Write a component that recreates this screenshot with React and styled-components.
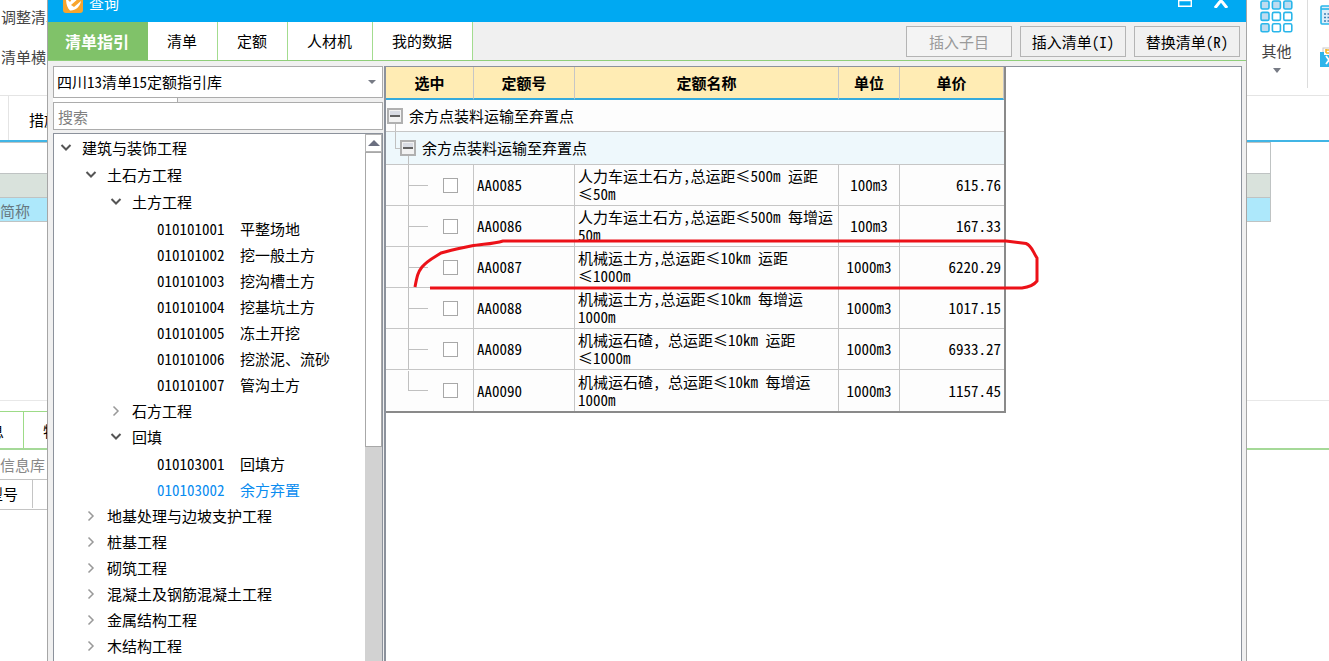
import React, { useState } from "react";
import styled, { createGlobalStyle, css } from "styled-components";

const tree = [
  {
    name: "建筑与装饰工程",
    open: true,
    children: [
      {
        name: "土石方工程",
        open: true,
        children: [
          {
            name: "土方工程",
            open: true,
            children: [
              { code: "010101001", name: "平整场地" },
              { code: "010101002", name: "挖一般土方" },
              { code: "010101003", name: "挖沟槽土方" },
              { code: "010101004", name: "挖基坑土方" },
              { code: "010101005", name: "冻土开挖" },
              { code: "010101006", name: "挖淤泥、流砂" },
              { code: "010101007", name: "管沟土方" },
            ],
          },
          { name: "石方工程" },
          {
            name: "回填",
            open: true,
            children: [
              { code: "010103001", name: "回填方" },
              { code: "010103002", name: "余方弃置" },
            ],
          },
        ],
      },
      { name: "地基处理与边坡支护工程" },
      { name: "桩基工程" },
      { name: "砌筑工程" },
      { name: "混凝土及钢筋混凝土工程" },
      { name: "金属结构工程" },
      { name: "木结构工程" },
    ],
  },
];

const quotas = [
  {
    code: "AA0085",
    name: ["人力车运土石方,总运距≤500m 运距", "≤50m"],
    unit: "100m3",
    price: "615.76",
  },
  {
    code: "AA0086",
    name: ["人力车运土石方,总运距≤500m 每增运", "50m"],
    unit: "100m3",
    price: "167.33",
  },
  {
    code: "AA0087",
    name: ["机械运土方,总运距≤10km 运距", "≤1000m"],
    unit: "1000m3",
    price: "6220.29",
  },
  {
    code: "AA0088",
    name: ["机械运土方,总运距≤10km 每增运", "1000m"],
    unit: "1000m3",
    price: "1017.15",
  },
  {
    code: "AA0089",
    name: ["机械运石碴, 总运距≤10km 运距", "≤1000m"],
    unit: "1000m3",
    price: "6933.27",
  },
  {
    code: "AA0090",
    name: ["机械运石碴, 总运距≤10km 每增运", "1000m"],
    unit: "1000m3",
    price: "1157.45",
  },
];

const tabs = ["清单指引", "清单", "定额", "人材机", "我的数据"];

const Chevron = ({ open }) => (
  <svg width="12" height="12" viewBox="0 0 12 12" fill="none">
    <path
      d={open ? "M1.5 3L6 7.5L10.5 3" : "M3.5 1.5L8 6L3.5 10.5"}
      stroke={open ? "#555" : "#999"}
      strokeWidth={open ? 2 : 1.5}
    />
  </svg>
);

const TreeNode = ({ node, selected, onSelect }) => {
  const [open, setOpen] = useState(!!node.open);
  if (node.code) {
    return (
      <li>
        <Leaf
          type="button"
          $active={selected === node.code}
          onClick={() => onSelect(node.code)}
        >
          <Code>{node.code}</Code>
          {node.name}
        </Leaf>
      </li>
    );
  }
  return (
    <li>
      <Branch type="button" aria-expanded={open} onClick={() => setOpen(!open)}>
        <Chevron open={open} />
        {node.name}
      </Branch>
      {open && node.children && (
        <Nested>
          {node.children.map((child) => (
            <TreeNode
              key={child.name}
              node={child}
              selected={selected}
              onSelect={onSelect}
            />
          ))}
        </Nested>
      )}
    </li>
  );
};

const Collapse = () => (
  <CollapseButton type="button" aria-label="折叠">
    <svg width="16" height="16" viewBox="0 0 16 16">
      <rect x="1" y="1" width="14" height="14" fill="#f2f2f2" stroke="#b0b0b0" strokeWidth="2" />
      <rect x="3" y="3" width="10" height="4" fill="#d9dce4" />
      <path d="M3 8H13" stroke="#333" strokeWidth="1.5" />
    </svg>
  </CollapseButton>
);

const Ribbon = () => (
  <RibbonBar>
    <RibbonText>
      <span>调整清单</span>
      <span>清单横</span>
    </RibbonText>
    <RibbonEnd>
      <Other type="button">
        <svg width="33" height="34" viewBox="0 0 33 34">
          {[0, 1, 2].map((r) =>
            [0, 1, 2].map((c) => (
              <rect
                key={`${r}${c}`}
                x={1 + c * 11.4}
                y={1 + r * 11.4}
                width="8"
                height="8"
                rx="1.5"
                fill={r === 0 || c === 0 ? "#bfdcf0" : "#fff"}
                stroke="#29b6ea"
                strokeWidth="1.6"
              />
            ))
          )}
        </svg>
        其他
        <svg width="8" height="5" viewBox="0 0 8 5">
          <path d="M0 0H8L4 5Z" fill="#777b85" />
        </svg>
      </Other>
      <RibbonTools>
        <svg width="18" height="20" viewBox="0 0 18 20">
          <rect x="1" y="1" width="16" height="18" rx="1" fill="#dceefa" stroke="#29b6ea" strokeWidth="1.6" />
          <path d="M1 4H17" stroke="#29b6ea" strokeWidth="1.6" />
          <path d="M4 9H17M4 12.5H17M4 16H17" stroke="#3d7fb5" strokeWidth="1.4" strokeDasharray="2 1.5" />
        </svg>
        <svg width="20" height="20" viewBox="0 0 20 20">
          <rect x="3" y="1" width="17" height="10" fill="#fff" stroke="#c8c8c8" />
          <path d="M6 2V6M6 3H20M6 6H20" stroke="#f7b52c" strokeWidth="1.6" />
          <path d="M0 5H4V8H20V20H0Z" fill="#2fb4ea" />
          <path d="M6 9L12 17M12 9L6 17" stroke="#fff" strokeWidth="1.8" />
        </svg>
      </RibbonTools>
    </RibbonEnd>
  </RibbonBar>
);

const Backdrop = () => (
  <Page>
    <Ribbon />
    <MainTabs>
      <span>措施项目</span>
    </MainTabs>
    <Sheet>
      <SheetRow />
      <SheetRow $kind="head" />
      <SheetRow $kind="picked">简称</SheetRow>
    </Sheet>
    <LowerTabs>
      <LowerTab>信息</LowerTab>
      <LowerTab>特征</LowerTab>
    </LowerTabs>
    <Library>信息库</Library>
    <SpecRow>
      <span>型号</span>
    </SpecRow>
  </Page>
);

const App = () => {
  const [tab, setTab] = useState(0);
  const [selected, setSelected] = useState("010103002");
  return (
    <>
      <GlobalStyle />
      <Backdrop />
      <Dialog role="dialog" aria-label="查询">
        <TitleBar>
          <svg width="20" height="19" viewBox="0 0 20 19">
            <rect width="20" height="19" rx="3" fill="#f8a52d" />
            <path d="M3 4C3 9 4 14 7 16.5C12 17 17 13 18 7L11 13L8 11L16 4L11 2L7 8Z" fill="#fff" />
          </svg>
          <h1>查询</h1>
          <WindowButton type="button" aria-label="最大化">
            <svg width="14" height="8" viewBox="0 0 14 8" fill="none">
              <path d="M0.7 0V7.3H13.3V0M0 1.5H14" stroke="#fff" strokeWidth="1.4" />
            </svg>
          </WindowButton>
          <WindowButton type="button" aria-label="关闭">
            <svg width="14" height="9" viewBox="0 0 14 9">
              <path d="M2 -5L13 9M12 -5L1 9" stroke="#fff" strokeWidth="3" />
            </svg>
          </WindowButton>
        </TitleBar>
        <TabBar>
          {tabs.map((label, i) => (
            <Tab
              key={label}
              type="button"
              $active={i === tab}
              onClick={() => setTab(i)}
            >
              {label}
            </Tab>
          ))}
          <Actions>
            <Action type="button" disabled>
              插入子目
            </Action>
            <Action type="button">插入清单(I)</Action>
            <Action type="button">替换清单(R)</Action>
          </Actions>
        </TabBar>
        <Body>
          <Side>
            <SelectBox>
              <select aria-label="指引库">
                <option>四川13清单15定额指引库</option>
              </select>
              <svg width="8" height="4" viewBox="0 0 8 4">
                <path d="M0 0H8L4 4Z" fill="#777b85" />
              </svg>
            </SelectBox>
            <Splitter />
            <Search type="text" placeholder="搜索" aria-label="搜索" />
            <TreePanel>
              <Tree>
                {tree.map((node) => (
                  <TreeNode
                    key={node.name}
                    node={node}
                    selected={selected}
                    onSelect={setSelected}
                  />
                ))}
              </Tree>
              <ScrollBar>
                <ScrollUp type="button" aria-label="向上滚动">
                  <svg width="12" height="6" viewBox="0 0 12 6">
                    <path d="M6 0L12 6H0Z" fill="#6b6f80" />
                  </svg>
                </ScrollUp>
                <Thumb />
              </ScrollBar>
            </TreePanel>
          </Side>
          <Content>
            <Table>
              <colgroup>
                <col width="88" />
                <col width="101" />
                <col width="264" />
                <col width="61" />
                <col width="104" />
              </colgroup>
              <thead>
                <tr>
                  <th>选中</th>
                  <th>定额号</th>
                  <th>定额名称</th>
                  <th>单位</th>
                  <th>单价</th>
                </tr>
              </thead>
              <tbody>
                <GroupRow>
                  <td colSpan="5">
                    <Group>
                      <Collapse />
                      余方点装料运输至弃置点
                    </Group>
                  </td>
                </GroupRow>
                <GroupRow $nested>
                  <td colSpan="5">
                    <Group $nested>
                      <Collapse />
                      余方点装料运输至弃置点
                    </Group>
                  </td>
                </GroupRow>
                {quotas.map((q, i) => (
                  <QuotaRow key={q.code}>
                    <td>
                      <Pick $last={i === quotas.length - 1}>
                        <input type="checkbox" aria-label={q.code} />
                      </Pick>
                    </td>
                    <td>{q.code}</td>
                    <NameCell>
                      {q.name.map((line) => (
                        <div key={line}>{line}</div>
                      ))}
                    </NameCell>
                    <UnitCell>{q.unit}</UnitCell>
                    <PriceCell>{q.price}</PriceCell>
                  </QuotaRow>
                ))}
              </tbody>
            </Table>
            <PenMark width="630" height="56" viewBox="0 0 630 56" fill="none">
              <path
                d="M5 48C7 37 8 33 12 28C18 21 25 18 31 14C42 11 52 9 61 7C73 5 83 5 93 2H596L616 4.5C622 7 623 13 627 19V42C624 46 620 48 612 49L20 49"
                stroke="#ec1118"
                strokeWidth="3"
              />
            </PenMark>
          </Content>
        </Body>
      </Dialog>
    </>
  );
};

export default App;

/* hwid: latin letters and digits take half of a CJK cell */
const GlobalStyle = createGlobalStyle`
  * {
    box-sizing: border-box;
  }

  body {
    margin: 0;
    overflow: hidden;
    background: #fff;
    color: #000;
    font-family: "Noto Sans CJK SC", sans-serif;
    font-size: 15px;
    font-feature-settings: "hwid";
    line-height: 18px;
  }

  button, input, select {
    font: inherit;
    font-feature-settings: inherit;
    color: inherit;
    margin: 0;
  }

  svg {
    display: block;
    flex-shrink: 0;
  }
`;

/* main window behind the dialog */

const Page = styled.main`
  display: flex;
  flex-direction: column;
  min-height: 100vh;
  white-space: nowrap;
`;

const RibbonBar = styled.header`
  display: flex;
  justify-content: space-between;
  height: 96px;
  border-bottom: 1px solid #e4e4e4;
  color: #444;
`;

const RibbonText = styled.div`
  display: flex;
  flex-direction: column;
  gap: 22px;
  padding: 8px 1px;
`;

const RibbonEnd = styled.div`
  display: flex;
  width: 83px;
  overflow: hidden;
`;

const Other = styled.button`
  display: flex;
  flex-direction: column;
  flex-shrink: 0;
  align-items: center;
  gap: 8px;
  width: 62px;
  height: 88px;
  padding: 0;
  border: none;
  border-right: 1px solid #dcdcdc;
  background: none;
`;

const RibbonTools = styled.div`
  display: flex;
  flex-direction: column;
  gap: 22px;
  padding: 5px 0 0 12px;
`;

const MainTabs = styled.nav`
  height: 46px;
  border-bottom: 2px solid #41b5e5;

  span {
    display: block;
    height: 44px;
    margin-left: 8px;
    padding-left: 20px;
    border-left: 1px solid #e4e4e4;
    line-height: 48px;
  }
`;

const Sheet = styled.div`
  height: 259px;
  padding-right: 58px;
  border-bottom: 1px solid #e8e8e8;
`;

const sheetColors = { head: "#d9e2dc", picked: "#ade8fb" };

const SheetRow = styled.div`
  height: ${({ $kind }) => ($kind ? 24 : 32)}px;
  border: solid #bfc3c3;
  border-width: ${({ $kind }) => ($kind ? "0 1px 1px 0" : "1px 1px 1px 0")};
  background: ${({ $kind }) => sheetColors[$kind] || "#fff"};
  color: #667780;
  line-height: 26px;
`;

const LowerTabs = styled.div`
  display: flex;
  height: 49px;
  padding-top: 10px;
  border-bottom: 2px solid #a5d998;
`;

const LowerTab = styled.div`
  display: flex;
  justify-content: flex-end;
  width: 24px;
  padding-right: 19px;
  border: solid #9ddb87;
  border-width: 1px 1px 0 0;
  line-height: 38px;

  & + & {
    justify-content: flex-start;
    width: 60px;
    padding-left: 19px;
  }
`;

const Library = styled.div`
  height: 29px;
  color: #888;
  line-height: 30px;
`;

const SpecRow = styled.div`
  width: 60px;
  height: 31px;
  border: solid #c4c4c4;
  border-width: 1px 0;
  line-height: 28px;

  span {
    display: flex;
    justify-content: flex-end;
    width: 33px;
    padding-right: 14px;
    border-right: 1px solid #c4c4c4;
  }
`;

/* dialog */

const Dialog = styled.section`
  position: fixed;
  inset: 0 82px 0 47px;
  display: flex;
  flex-direction: column;
  overflow: hidden;
  border: solid #a6a6a6;
  border-width: 0 1px;
  background: #f0f0f0;
  white-space: nowrap;
`;

const TitleBar = styled.header`
  display: flex;
  flex-shrink: 0;
  align-items: center;
  gap: 6px;
  height: 38px;
  margin-top: -16px;
  padding: 0 18px 0 15px;
  background: #00a9f2;
  color: #fff;

  h1 {
    flex: 1;
    margin: 0;
    font-size: 15px;
    font-weight: 400;
  }
`;

const WindowButton = styled.button`
  padding: 0;
  border: none;
  background: none;

  & + & {
    margin-left: 16px;
  }
`;

const TabBar = styled.nav`
  display: flex;
  flex-shrink: 0;
  height: 39px;
  border-bottom: 1px solid #8fce7a;
`;

const Tab = styled.button`
  padding: 0 20px 0 19px;
  border: none;
  border-right: 1px solid #a3dc8f;
  background: #fff;

  ${({ $active }) =>
    $active &&
    css`
      padding: 0 18px 0 17px;
      border-color: #80c269;
      background: #80c269;
      color: #fff;
      font-size: 16px;
      font-weight: 700;
    `}
`;

const Actions = styled.div`
  display: flex;
  gap: 8px;
  margin-left: auto;
  padding: 4px 6px 3px 0;
`;

const Action = styled.button`
  width: 106px;
  padding: 0;
  border: 1px solid #b4b4b4;
  background: #f0f0f0;

  &:disabled {
    background: #f4f4f4;
    color: #9a9a9a;
  }
`;

const Body = styled.div`
  display: flex;
  flex: 1;
  gap: 1px;
  min-height: 0;
  padding: 5px 4px 0 5px;
`;

const Side = styled.aside`
  display: flex;
  flex-direction: column;
  width: 330px;
`;

const SelectBox = styled.div`
  display: flex;
  align-items: center;
  height: 32px;
  padding-right: 6px;
  border: 1px solid #acacac;
  background: #fff;

  select {
    flex: 1;
    height: 100%;
    padding: 0 3px;
    border: none;
    outline: none;
    background: none;
    appearance: none;
  }
`;

const Splitter = styled.div`
  width: 125px;
  height: 4px;
  border-right: 1px solid #acacac;
  background: #fff;
`;

const Search = styled.input`
  height: 28px;
  padding: 0 4px;
  border: 1px solid #acacac;
  outline: none;
  background: #fff;

  &::placeholder {
    color: #808080;
  }
`;

const TreePanel = styled.div`
  display: flex;
  flex: 1;
  min-height: 0;
  margin-top: 3px;
  border: 1px solid #8c929c;
  border-bottom: none;
  background: #fff;
`;

const Tree = styled.ul`
  flex: 1;
  margin: 0;
  padding: 1px 0 0 6px;
  overflow: hidden;
  list-style: none;
`;

const Nested = styled.ul`
  margin: 0;
  padding: 1px 0 0 25px;
  list-style: none;
`;

const Branch = styled.button`
  display: flex;
  align-items: center;
  gap: 10px;
  height: 26px;
  padding: 0;
  border: none;
  background: none;
`;

const Leaf = styled(Branch)`
  gap: 0;
  padding-left: 22px;
  color: ${({ $active }) => ($active ? "#0a8cf0" : "inherit")};
`;

const Code = styled.span`
  width: 83px;
  text-align: left;
`;

const ScrollBar = styled.div`
  width: 17px;
  background: #d2d2d2;
`;

const ScrollUp = styled.button`
  display: flex;
  align-items: center;
  justify-content: center;
  width: 100%;
  height: 18px;
  padding: 0;
  border: 1px solid #b4b4b4;
  background: #fff;
`;

const Thumb = styled.div`
  height: 56%;
  border: 1px solid #a8a8a8;
  background: #fff;
`;

const Content = styled.div`
  position: relative;
  flex: 1;
  border: solid #8c929c;
  border-width: 1px 1px 0 2px;
  background: #fff;
`;

const Table = styled.table`
  width: 620px;
  table-layout: fixed;
  border-spacing: 0;
  border: solid #8a8a8a;
  border-width: 0 2px 2px 0;
  background: #fdfdfd;

  th {
    height: 33px;
    padding: 0;
    border-right: 1px solid #c6c6c6;
    border-bottom: 2px solid #35aadc;
    background: #ffecb4;
    font-weight: 700;
  }

  td {
    padding: 0;
    border-right: 1px solid #c6c6c6;
    border-bottom: 1px solid #c6c6c6;
  }

  td:last-child {
    border-right: none;
  }

  tr:last-child td {
    border-bottom: none;
  }
`;

const GroupRow = styled.tr`
  height: ${({ $nested }) => ($nested ? 33 : 32)}px;
  background: ${({ $nested }) => ($nested ? "#eef8fc" : "#fdfdfd")};
`;

const line = "linear-gradient(#c0c0c0, #c0c0c0)";

const Group = styled.div`
  display: flex;
  align-items: center;
  gap: 6px;
  height: ${({ $nested }) => ($nested ? 32 : 31)}px;
  padding-left: ${({ $nested }) => ($nested ? 14 : 1)}px;
  background: ${({ $nested }) =>
    $nested
      ? `${line} 9px 0 / 1px 50% no-repeat,
         ${line} 9px 50% / 6px 1px no-repeat,
         ${line} 22px 100% / 1px 50% no-repeat`
      : `${line} 9px 100% / 1px 50% no-repeat`};
`;

const CollapseButton = styled.button`
  padding: 0;
  border: none;
  background: none;
`;

const QuotaRow = styled.tr`
  height: 41px;

  td {
    padding: 0 3px;
  }

  td:first-child {
    padding: 0;
  }
`;

/* connector lines of the tree run through the first column */
const Pick = styled.label`
  display: flex;
  align-items: center;
  height: 40px;
  padding-left: 22px;
  background: ${line} 22px 0 / 1px ${({ $last }) => ($last ? "50%" : "100%")}
    no-repeat;

  &::before {
    content: "";
    width: 20px;
    height: 1px;
    margin-right: 15px;
    background: #c0c0c0;
  }

  input {
    width: 15px;
    height: 15px;
    border: 1px solid #a8a8a8;
    background: #fff;
    appearance: none;
  }

  input:checked {
    background: #35aadc;
  }
`;

const NameCell = styled.td`
  overflow: hidden;
`;

const UnitCell = styled.td`
  text-align: center;
`;

const PriceCell = styled.td`
  text-align: right;
`;

/* hand-drawn mark round the third quota */
const PenMark = styled.svg`
  position: absolute;
  top: 172px;
  left: 24px;
  pointer-events: none;
`;
